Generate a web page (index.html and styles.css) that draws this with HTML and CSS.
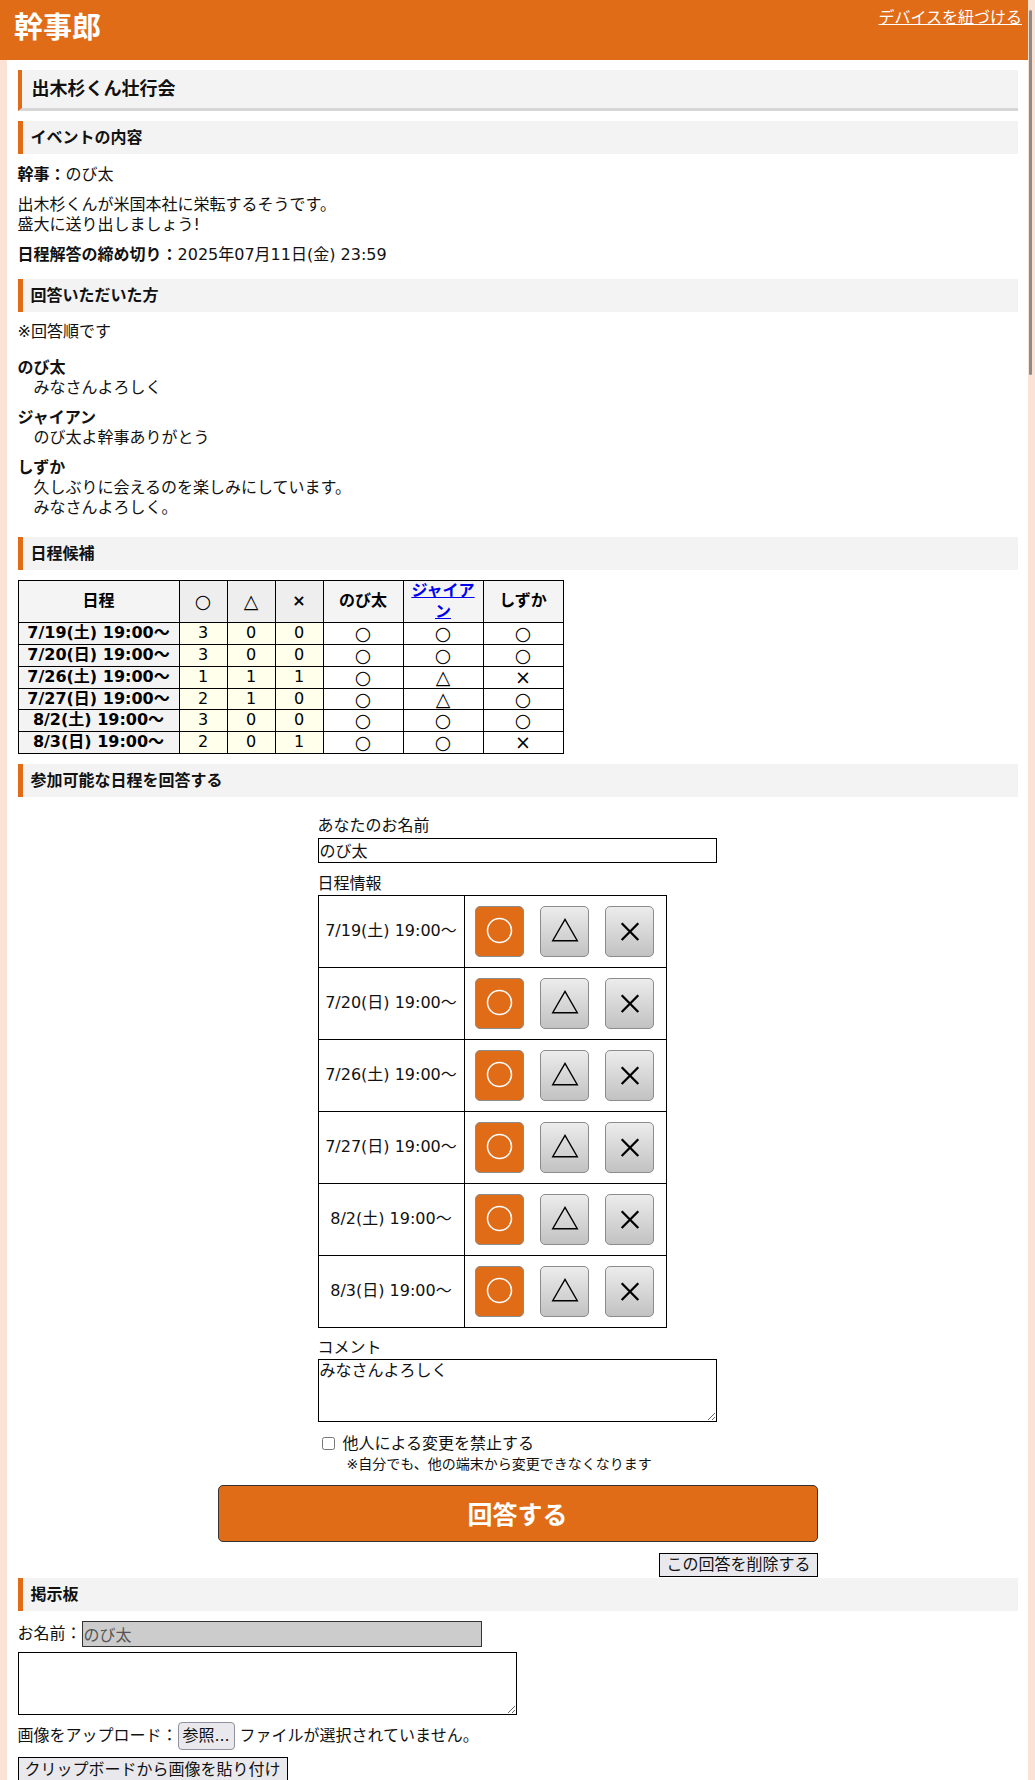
FILE: index.html
```html
<!DOCTYPE html>
<html lang="ja">
<head>
<meta charset="utf-8">
<title>幹事郎</title>
<link rel="stylesheet" href="styles.css">
</head>
<body>
<div class="app">
  <header class="topbar">
    <h1 class="logo">幹事郎</h1>
    <a class="device-link" href="#">デバイスを紐づける</a>
  </header>
  <main class="main">
    <div class="content">
      <h2 class="event-title">出木杉くん壮行会</h2>

      <h3 class="band band-first">イベントの内容</h3>
      <p class="organizer"><b>幹事：</b>のび太</p>
      <p class="desc">出木杉くんが米国本社に栄転するそうです。<br>盛大に送り出しましょう!</p>
      <p class="deadline"><b>日程解答の締め切り：</b>2025年07月11日(金) 23:59</p>

      <h3 class="band band-answered">回答いただいた方</h3>
      <p class="order-note">※回答順です</p>
      <dl class="answers">
        <dt>のび太</dt>
        <dd>みなさんよろしく</dd>
        <dt>ジャイアン</dt>
        <dd>のび太よ幹事ありがとう</dd>
        <dt>しずか</dt>
        <dd>久しぶりに会えるのを楽しみにしています。<br>みなさんよろしく。</dd>
      </dl>

      <h3 class="band band-schedule">日程候補</h3>
      <table class="summary">
        <thead>
          <tr>
            <th class="h-date">日程</th>
            <th class="h-cnt h-mark">○</th>
            <th class="h-cnt h-mark h-light">△</th>
            <th class="h-cnt">×</th>
            <th class="h-name">のび太</th>
            <th class="h-name"><a href="#">ジャイアン</a></th>
            <th class="h-name">しずか</th>
          </tr>
        </thead>
        <tbody>
          <tr><th>7/19(土) 19:00～</th><td class="cnt">3</td><td class="cnt">0</td><td class="cnt">0</td><td class="mark">○</td><td class="mark">○</td><td class="mark">○</td></tr>
          <tr><th>7/20(日) 19:00～</th><td class="cnt">3</td><td class="cnt">0</td><td class="cnt">0</td><td class="mark">○</td><td class="mark">○</td><td class="mark">○</td></tr>
          <tr><th>7/26(土) 19:00～</th><td class="cnt">1</td><td class="cnt">1</td><td class="cnt">1</td><td class="mark">○</td><td class="mark">△</td><td class="mark">×</td></tr>
          <tr><th>7/27(日) 19:00～</th><td class="cnt">2</td><td class="cnt">1</td><td class="cnt">0</td><td class="mark">○</td><td class="mark">△</td><td class="mark">○</td></tr>
          <tr><th>8/2(土) 19:00～</th><td class="cnt">3</td><td class="cnt">0</td><td class="cnt">0</td><td class="mark">○</td><td class="mark">○</td><td class="mark">○</td></tr>
          <tr><th>8/3(日) 19:00～</th><td class="cnt">2</td><td class="cnt">0</td><td class="cnt">1</td><td class="mark">○</td><td class="mark">○</td><td class="mark">×</td></tr>
        </tbody>
      </table>

      <h3 class="band band-form">参加可能な日程を回答する</h3>
      <div class="answer-fields">
        <label class="field-label">あなたのお名前</label>
        <input class="name-input" type="text" value="のび太">
        <div class="field-label label-sched">日程情報</div>
        <table class="choose">
          <tr>
            <td class="c-date">7/19(土) 19:00～</td>
            <td class="c-btns"><div class="btn-row">
              <button type="button" class="choice yes"><svg viewBox="0 0 47 49" width="47" height="49"><circle cx="23.5" cy="23.5" r="12" fill="none" stroke="#fff" stroke-width="1.5"/></svg></button>
              <button type="button" class="choice"><svg viewBox="0 0 47 49" width="47" height="49"><path d="M11.7 33.7 L36.3 33.7 L24 12.3 Z" fill="none" stroke="#000" stroke-width="1.4"/></svg></button>
              <button type="button" class="choice"><svg viewBox="0 0 47 49" width="47" height="49"><path d="M15.7 16.3 L32.3 33 M32.3 16.3 L15.7 33" stroke="#000" stroke-width="2.3"/></svg></button>
            </div></td>
          </tr>
          <tr>
            <td class="c-date">7/20(日) 19:00～</td>
            <td class="c-btns"><div class="btn-row">
              <button type="button" class="choice yes"><svg viewBox="0 0 47 49" width="47" height="49"><circle cx="23.5" cy="23.5" r="12" fill="none" stroke="#fff" stroke-width="1.5"/></svg></button>
              <button type="button" class="choice"><svg viewBox="0 0 47 49" width="47" height="49"><path d="M11.7 33.7 L36.3 33.7 L24 12.3 Z" fill="none" stroke="#000" stroke-width="1.4"/></svg></button>
              <button type="button" class="choice"><svg viewBox="0 0 47 49" width="47" height="49"><path d="M15.7 16.3 L32.3 33 M32.3 16.3 L15.7 33" stroke="#000" stroke-width="2.3"/></svg></button>
            </div></td>
          </tr>
          <tr>
            <td class="c-date">7/26(土) 19:00～</td>
            <td class="c-btns"><div class="btn-row">
              <button type="button" class="choice yes"><svg viewBox="0 0 47 49" width="47" height="49"><circle cx="23.5" cy="23.5" r="12" fill="none" stroke="#fff" stroke-width="1.5"/></svg></button>
              <button type="button" class="choice"><svg viewBox="0 0 47 49" width="47" height="49"><path d="M11.7 33.7 L36.3 33.7 L24 12.3 Z" fill="none" stroke="#000" stroke-width="1.4"/></svg></button>
              <button type="button" class="choice"><svg viewBox="0 0 47 49" width="47" height="49"><path d="M15.7 16.3 L32.3 33 M32.3 16.3 L15.7 33" stroke="#000" stroke-width="2.3"/></svg></button>
            </div></td>
          </tr>
          <tr>
            <td class="c-date">7/27(日) 19:00～</td>
            <td class="c-btns"><div class="btn-row">
              <button type="button" class="choice yes"><svg viewBox="0 0 47 49" width="47" height="49"><circle cx="23.5" cy="23.5" r="12" fill="none" stroke="#fff" stroke-width="1.5"/></svg></button>
              <button type="button" class="choice"><svg viewBox="0 0 47 49" width="47" height="49"><path d="M11.7 33.7 L36.3 33.7 L24 12.3 Z" fill="none" stroke="#000" stroke-width="1.4"/></svg></button>
              <button type="button" class="choice"><svg viewBox="0 0 47 49" width="47" height="49"><path d="M15.7 16.3 L32.3 33 M32.3 16.3 L15.7 33" stroke="#000" stroke-width="2.3"/></svg></button>
            </div></td>
          </tr>
          <tr>
            <td class="c-date">8/2(土) 19:00～</td>
            <td class="c-btns"><div class="btn-row">
              <button type="button" class="choice yes"><svg viewBox="0 0 47 49" width="47" height="49"><circle cx="23.5" cy="23.5" r="12" fill="none" stroke="#fff" stroke-width="1.5"/></svg></button>
              <button type="button" class="choice"><svg viewBox="0 0 47 49" width="47" height="49"><path d="M11.7 33.7 L36.3 33.7 L24 12.3 Z" fill="none" stroke="#000" stroke-width="1.4"/></svg></button>
              <button type="button" class="choice"><svg viewBox="0 0 47 49" width="47" height="49"><path d="M15.7 16.3 L32.3 33 M32.3 16.3 L15.7 33" stroke="#000" stroke-width="2.3"/></svg></button>
            </div></td>
          </tr>
          <tr>
            <td class="c-date">8/3(日) 19:00～</td>
            <td class="c-btns"><div class="btn-row">
              <button type="button" class="choice yes"><svg viewBox="0 0 47 49" width="47" height="49"><circle cx="23.5" cy="23.5" r="12" fill="none" stroke="#fff" stroke-width="1.5"/></svg></button>
              <button type="button" class="choice"><svg viewBox="0 0 47 49" width="47" height="49"><path d="M11.7 33.7 L36.3 33.7 L24 12.3 Z" fill="none" stroke="#000" stroke-width="1.4"/></svg></button>
              <button type="button" class="choice"><svg viewBox="0 0 47 49" width="47" height="49"><path d="M15.7 16.3 L32.3 33 M32.3 16.3 L15.7 33" stroke="#000" stroke-width="2.3"/></svg></button>
            </div></td>
          </tr>
        </table>
        <div class="field-label label-comment">コメント</div>
        <textarea class="comment">みなさんよろしく</textarea>
        <label class="lock"><input type="checkbox"> 他人による変更を禁止する</label>
        <div class="lock-note">※自分でも、他の端末から変更できなくなります</div>
      </div>
      <div class="submit-area">
        <button type="button" class="submit">回答する</button>
        <div class="delete-row"><button type="button" class="plain-btn">この回答を削除する</button></div>
      </div>

      <h3 class="band band-board">掲示板</h3>
      <div class="board-name">お名前：<input class="board-input" type="text" value="のび太" readonly></div>
      <textarea class="board-text"></textarea>
      <div class="upload-row">画像をアップロード：<button type="button" class="browse">参照...</button> ファイルが選択されていません。</div>
      <div class="paste-row"><button type="button" class="plain-btn">クリップボードから画像を貼り付け</button></div>
    </div>
  </main>
</div>
<div class="scroll-thumb"></div>
</body>
</html>
```

FILE: styles.css
```css
* { box-sizing: border-box; }

body {
  margin: 0;
  background: #fae3d4;
  font-family: "DejaVu Sans", "Noto Sans CJK JP", sans-serif;
  font-size: 16px;
  line-height: 20px;
  color: #111;
}

.app {
  width: 1028px;
}

.topbar {
  background: #e06c18;
  height: 60px;
  display: flex;
  justify-content: space-between;
  align-items: flex-start;
}

.logo {
  margin: 0;
  padding: 8px 0 0 14px;
  font-size: 29px;
  line-height: 40px;
  font-weight: bold;
  color: #fff;
}

.device-link {
  margin: 8px 6px 0 0;
  color: #fff;
  font-size: 16px;
  line-height: 20px;
  text-decoration: underline;
}

.main {
  margin-left: 7px;
  background: #fff;
  padding: 10px 0 20px;
}

.content {
  width: 1000px;
  margin: 0 auto;
}

.event-title {
  margin: 0;
  height: 41px;
  background: #f3f3f3;
  border-left: 4px solid #e06c18;
  border-bottom: 3px solid #d6d6d6;
  padding-left: 10px;
  font-size: 18px;
  line-height: 38px;
  font-weight: bold;
}

.band {
  margin: 10px 0 0;
  height: 33px;
  background: #f3f3f3;
  border-left: 5px solid #e06c18;
  padding-left: 8px;
  font-size: 16px;
  line-height: 33px;
  font-weight: bold;
}

.band-answered { margin-top: 14px; }
.band-schedule { margin-top: 19px; }
.band-form { margin-top: 10px; }
.band-board { margin-top: 1px; }

p { margin: 10px 0 0; }
.organizer { margin-top: 11px; }

.answers { margin: 16px 0 0; }
.answers dt { font-weight: bold; margin-top: 10px; }
.answers dt:first-child { margin-top: 0; }
.answers dd { margin: 0 0 0 16px; }

/* summary table */
.summary {
  margin-top: 10px;
  border-collapse: collapse;
  table-layout: fixed;
  width: 545px;
  font-size: 16px;
  line-height: 20.7px;
}
.summary th,
.summary td {
  border: 1px solid #000;
  padding: 0 4px;
  text-align: center;
  color: #000;
}
.summary thead th { background: #f4f4f4; }
.summary thead .h-cnt { background: #eeeeee; }
.summary thead .h-mark { font-size: 19px; }
.summary thead .h-light { font-weight: normal; }
.h-date { width: 161px; }
.h-cnt { width: 48px; }
.h-name { width: 80px; }
.summary tbody th { background: #f3f3f3; white-space: nowrap; }
.summary td { font-weight: normal; }
.summary td.mark { font-size: 19px; }
.summary td.cnt { background: #ffffec; }
.summary a { color: #0000ee; text-decoration: underline; }

/* answer form */
.answer-fields {
  width: 400px;
  margin: 19px auto 0;
}
.field-label { display: block; }
.name-input {
  display: block;
  margin-top: 2px;
  width: 399px;
  height: 25px;
  border: 1px solid #000;
  padding: 0 1px;
  font: inherit;
  color: #111;
}
.label-sched { margin-top: 11px; }

.choose {
  margin-top: 1px;
  border-collapse: collapse;
}
.choose td {
  border: 1px solid #000;
  height: 72px;
  padding: 0;
}
.c-date {
  width: 146px;
  text-align: center;
}
.c-btns { width: 202px; }
.btn-row {
  display: flex;
  gap: 16px;
  padding-left: 10px;
}
.choice {
  width: 49px;
  height: 51px;
  padding: 0;
  border: 1px solid #8c8c8c;
  border-radius: 5px;
  background: linear-gradient(#ececec, #c2c2c2);
  display: flex;
  align-items: center;
  justify-content: center;
}
.choice svg { display: block; }
.choice.yes { background: #e06c18; }

.label-comment { margin-top: 10px; }
.comment {
  display: block;
  margin-top: 1px;
  width: 399px;
  height: 63px;
  border: 1px solid #000;
  padding: 1px;
  font: inherit;
  color: #111;
}
.lock {
  display: block;
  margin-top: 12px;
}
.lock input {
  margin: 0 3px 0 4px;
  width: 13px;
  height: 13px;
  vertical-align: -1px;
}
.lock-note {
  margin-left: 29px;
  font-size: 14px;
  line-height: 18px;
  margin-top: 1px;
}

.submit-area {
  width: 600px;
  margin: 12px auto 0;
}
.submit {
  display: block;
  width: 600px;
  height: 57px;
  background: #e06c18;
  border: 1px solid #333;
  border-radius: 5px;
  color: #fff;
  font-family: inherit;
  font-size: 25px;
  font-weight: bold;
}
.delete-row {
  margin-top: 11px;
  text-align: right;
  line-height: 0;
}
.plain-btn {
  font: inherit;
  line-height: 20px;
  height: 24px;
  padding: 1px 6px;
  background: #e9e9ed;
  border: 1px solid #000;
  border-radius: 0;
  color: #111;
}

/* board */
.board-name {
  margin-top: 10px;
  display: flex;
  align-items: center;
}
.board-input {
  width: 400px;
  height: 26px;
  background: #cccccc;
  border: 1px solid #333;
  padding: 0 1px;
  font: inherit;
  color: #555;
}
.board-text {
  display: block;
  margin-top: 5px;
  width: 499px;
  height: 63px;
  border: 1px solid #000;
  font: inherit;
}
.upload-row {
  margin-top: 7px;
  display: flex;
  align-items: center;
  white-space: pre;
}
.browse {
  font: inherit;
  width: 57px;
  height: 28px;
  padding: 0;
  background: #e9e9ed;
  border: 1px solid #8f8f9d;
  border-radius: 4px;
  color: #111;
}
.paste-row { margin-top: 7px; }
.paste-row .plain-btn { height: 26px; }

.scroll-thumb {
  position: absolute;
  left: 1029px;
  top: 10px;
  width: 3px;
  height: 365px;
  background: #8b8b8b;
  border-radius: 2px;
}
```
